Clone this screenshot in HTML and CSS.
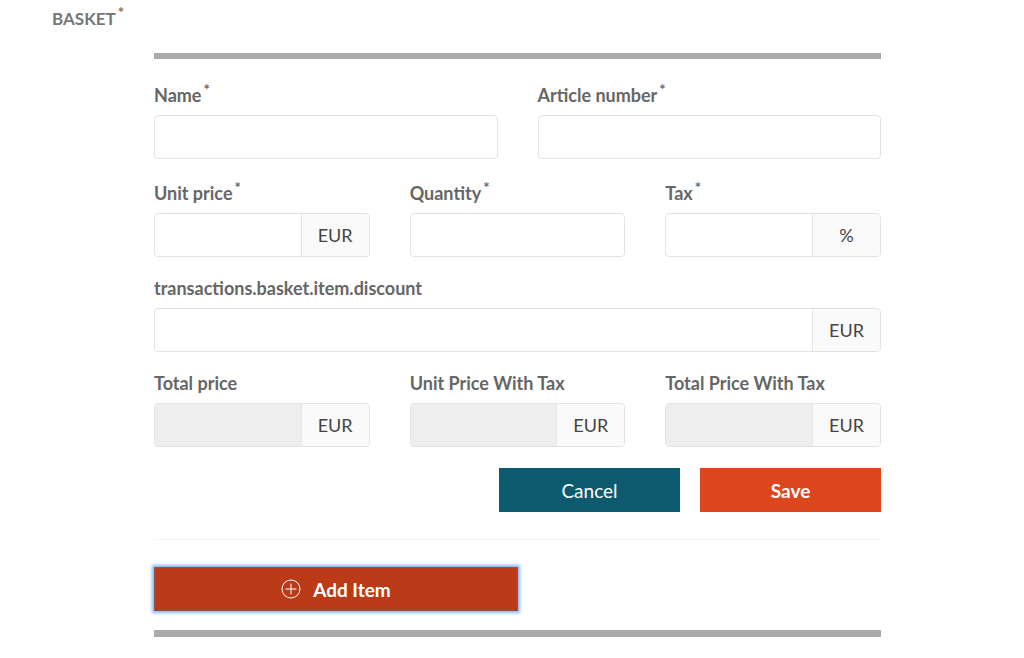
FILE: index.html
```html
<!DOCTYPE html>
<html>
<head>
<meta charset="utf-8">
<link rel="stylesheet" href="styles.css">
</head>
<body>
<div class="page">
  <h2 class="section-title">BASKET<sup class="req">*</sup></h2>
  <div class="basket">
    <form class="item-form">
      <div class="row cols-2">
        <div class="group">
          <label class="lbl">Name<sup class="req">*</sup></label>
          <div class="field"><input class="inp" type="text"></div>
        </div>
        <div class="group">
          <label class="lbl">Article number<sup class="req">*</sup></label>
          <div class="field"><input class="inp" type="text"></div>
        </div>
      </div>
      <div class="row cols-3">
        <div class="group">
          <label class="lbl">Unit price<sup class="req">*</sup></label>
          <div class="field"><input class="inp" type="text"><span class="addon">EUR</span></div>
        </div>
        <div class="group">
          <label class="lbl">Quantity<sup class="req">*</sup></label>
          <div class="field"><input class="inp" type="text"></div>
        </div>
        <div class="group">
          <label class="lbl">Tax<sup class="req">*</sup></label>
          <div class="field"><input class="inp" type="text"><span class="addon">%</span></div>
        </div>
      </div>
      <div class="row">
        <div class="group">
          <label class="lbl">transactions.basket.item.discount</label>
          <div class="field"><input class="inp" type="text"><span class="addon">EUR</span></div>
        </div>
      </div>
      <div class="row cols-3">
        <div class="group">
          <label class="lbl">Total price</label>
          <div class="field disabled"><input class="inp" type="text" disabled><span class="addon">EUR</span></div>
        </div>
        <div class="group">
          <label class="lbl">Unit Price With Tax</label>
          <div class="field disabled"><input class="inp" type="text" disabled><span class="addon">EUR</span></div>
        </div>
        <div class="group">
          <label class="lbl">Total Price With Tax</label>
          <div class="field disabled"><input class="inp" type="text" disabled><span class="addon">EUR</span></div>
        </div>
      </div>
      <div class="actions">
        <button type="button" class="btn btn-cancel">Cancel</button>
        <button type="button" class="btn btn-save">Save</button>
      </div>
    </form>
    <div class="divider"></div>
    <button type="button" class="btn btn-add">
      <svg class="plus" width="20" height="20" viewBox="0 0 20 20"><circle cx="10" cy="10" r="9" fill="none" stroke="#fff" stroke-width="1"/><path d="M10 4.5v11M4.5 10h11" stroke="#fff" stroke-width="1" fill="none"/></svg>
      <span>Add Item</span>
    </button>
  </div>
</div>
</body>
</html>
```

FILE: styles.css
```css
html, body {
  margin: 0;
  padding: 0;
  background: #fff;
}
body {
  font-family: Lato, "Open Sans", "Liberation Sans", sans-serif;
  color: #666;
}
.page {
  padding: 0 0 0 52px;
}
.section-title {
  margin: 0;
  padding-top: 8px;
  font-size: 17px;
  line-height: 22px;
  font-weight: 700;
  color: #777;
}
.req {
  font-size: 15px;
  font-weight: 700;
  vertical-align: top;
  position: relative;
  top: -3px;
  margin-left: 2px;
  line-height: 1;
}
.basket {
  margin: 23px 0 0 102px;
  width: 727px;
  border-top: 6px solid #aaa;
  border-bottom: 7px solid #aaa;
  padding-top: 26px;
  padding-bottom: 19px;
}
.row {
  display: grid;
  grid-template-columns: minmax(0, 1fr);
  column-gap: 40px;
  margin-bottom: 21px;
}
.row.cols-2 {
  grid-template-columns: minmax(0, 1fr) minmax(0, 1fr);
  margin-bottom: 24px;
}
.row.cols-3 { grid-template-columns: minmax(0, 1fr) minmax(0, 1fr) minmax(0, 1fr); }
.lbl {
  display: block;
  font-size: 18px;
  line-height: 20px;
  font-weight: 700;
  color: #666;
  margin-bottom: 10px;
  white-space: nowrap;
}
.field {
  display: flex;
  height: 44px;
  border: 1px solid #e3e3e3;
  border-radius: 4px;
  box-sizing: border-box;
  overflow: hidden;
  background: #fff;
}
.inp {
  flex: 1 1 0;
  width: 0;
  min-width: 0;
  border: 0;
  outline: 0;
  margin: 0;
  padding: 0 12px;
  background: transparent;
  font: inherit;
}
.field.disabled .inp { background: #eee; }
.addon {
  flex: 0 0 67px;
  display: flex;
  align-items: center;
  justify-content: center;
  background: #fafafa;
  border-left: 1px solid #e6e6e6;
  font-size: 18px;
  color: #444;
}
.actions {
  display: flex;
  justify-content: flex-end;
  gap: 20px;
  margin-top: 20px;
}
.btn {
  border: 0;
  height: 44px;
  font-family: inherit;
  font-size: 19px;
  color: #fff;
  cursor: pointer;
}
.btn-cancel {
  width: 181px;
  background: #0b5a6e;
  font-weight: 400;
}
.btn-save {
  width: 181px;
  background: #dc461d;
  font-weight: 700;
}
.divider {
  margin-top: 27px;
  border-top: 1px dotted #eaeaea;
}
.btn-add {
  margin-top: 27px;
  width: 364px;
  background: #bb3a17;
  font-weight: 700;
  border: 1px solid #8a5548;
  box-shadow: 0 0 3px 2px #86b6f5;
  display: flex;
  align-items: center;
  justify-content: center;
  gap: 12px;
}
.plus { display: block; }
```
